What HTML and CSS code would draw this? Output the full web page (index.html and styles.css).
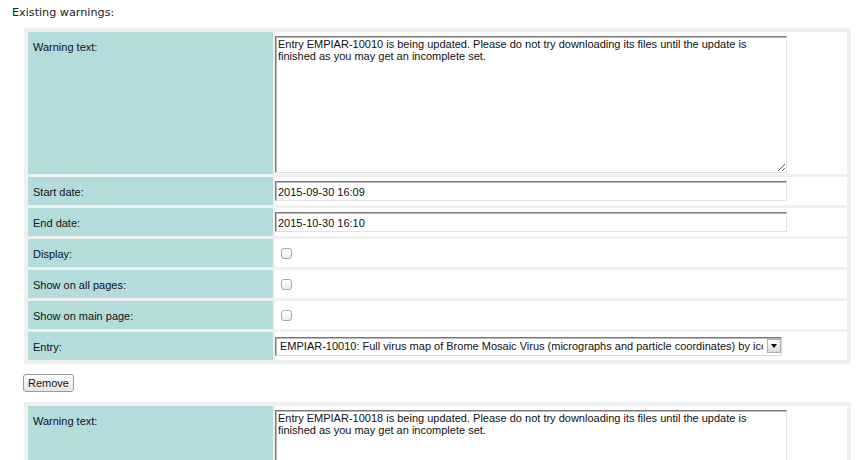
FILE: index.html
```html
<!DOCTYPE html>
<html>
<head>
<meta charset="utf-8">
<link rel="stylesheet" href="styles.css">
</head>
<body>
<div class="page">
  <div class="heading">Existing warnings:</div>

  <div class="warning">
    <table class="wtable">
      <tr>
        <td class="label">Warning text:</td>
        <td class="value"><textarea class="wtext">Entry EMPIAR-10010 is being updated. Please do not try downloading its files until the update is finished as you may get an incomplete set.</textarea></td>
      </tr>
      <tr>
        <td class="label">Start date:</td>
        <td class="value mid"><input class="field" type="text" value="2015-09-30 16:09"></td>
      </tr>
      <tr>
        <td class="label">End date:</td>
        <td class="value mid"><input class="field" type="text" value="2015-10-30 16:10"></td>
      </tr>
      <tr>
        <td class="label">Display:</td>
        <td class="value mid"><input class="check" type="checkbox"></td>
      </tr>
      <tr>
        <td class="label">Show on all pages:</td>
        <td class="value mid"><input class="check" type="checkbox"></td>
      </tr>
      <tr>
        <td class="label">Show on main page:</td>
        <td class="value mid"><input class="check" type="checkbox"></td>
      </tr>
      <tr>
        <td class="label">Entry:</td>
        <td class="value mid">
          <span class="selwrap">
            <select class="sel">
              <option>EMPIAR-10010: Full virus map of Brome Mosaic Virus (micrographs and particle coordinates) by icosahedral reconstruction</option>
            </select>
            <span class="selarrow"><span class="tri"></span></span>
          </span>
        </td>
      </tr>
    </table>
    <button class="btn" type="button">Remove</button>
  </div>

  <div class="warning">
    <table class="wtable">
      <tr>
        <td class="label">Warning text:</td>
        <td class="value"><textarea class="wtext">Entry EMPIAR-10018 is being updated. Please do not try downloading its files until the update is finished as you may get an incomplete set.</textarea></td>
      </tr>
    </table>
  </div>
</div>
</body>
</html>
```

FILE: styles.css
```css
html, body {
  margin: 0;
  padding: 0;
  background: #ffffff;
}

.page {
  padding: 6px 0 0 12px;
  font-family: "Liberation Sans", Arial, sans-serif;
  color: #111;
}

.heading {
  font-family: "DejaVu Sans", Verdana, sans-serif;
  font-size: 11.2px;
  line-height: 13px;
  color: #222;
  margin: 0 0 9px 0;
}

.warning {
  margin-left: 12px;
}

.wtable {
  width: 827px;
  background: #f0f0f0;
  border-collapse: separate;
  border-spacing: 2px 3px;
  padding: 1px 2px;
  table-layout: fixed;
}

.label {
  width: 235px;
  background: #b4dcdb;
  font-size: 11px;
  line-height: 13px;
  padding: 9px 5px 6px 5px;
  vertical-align: top;
  color: #111;
}

.value {
  background: #ffffff;
  padding: 0;
  vertical-align: top;
}

.value.mid {
  vertical-align: middle;
  height: 28px;
}

.wtext {
  display: block;
  box-sizing: border-box;
  width: 512px;
  height: 137px;
  margin: 4px 0 1px 0;
  padding: 1px 2px;
  font-family: "Liberation Sans", Arial, sans-serif;
  font-size: 11px;
  line-height: 12px;
  color: #111;
  border: 1px solid;
  border-color: #7a7a7a #e2e2e2 #e2e2e2 #7a7a7a;
  box-shadow: inset 1px 1px 0 #b8b8b8;
  border-radius: 0;
  outline: none;
}

.field {
  display: block;
  box-sizing: border-box;
  width: 512px;
  height: 20px;
  margin: 0;
  padding: 1px 2px 0 2px;
  font-family: "Liberation Sans", Arial, sans-serif;
  font-size: 11px;
  color: #111;
  border: 1px solid;
  border-color: #7a7a7a #e2e2e2 #e2e2e2 #7a7a7a;
  box-shadow: inset 1px 1px 0 #b8b8b8;
  border-radius: 0;
  outline: none;
}

.check {
  -webkit-appearance: none;
  appearance: none;
  display: block;
  box-sizing: border-box;
  width: 11px;
  height: 11px;
  margin: 0 0 0 6px;
  border: 1px solid #a8a8a8;
  border-radius: 3px;
  background: linear-gradient(#ffffff, #ececec);
}

.selwrap {
  position: relative;
  display: block;
  width: 507px;
  height: 19px;
}

.sel {
  -webkit-appearance: none;
  appearance: none;
  display: block;
  box-sizing: border-box;
  width: 507px;
  height: 19px;
  margin: 0;
  padding: 0 18px 0 4px;
  font-family: "Liberation Sans", Arial, sans-serif;
  font-size: 11px;
  color: #111;
  background: #ffffff;
  border: 1px solid;
  border-color: #7a7a7a #d8d8d8 #d8d8d8 #7a7a7a;
  box-shadow: inset 1px 1px 0 #b8b8b8;
  border-radius: 0;
  outline: none;
}

.selarrow {
  position: absolute;
  right: 1px;
  top: 2px;
  width: 14px;
  height: 14px;
  box-sizing: border-box;
  border: 1px solid #b0b0b0;
  background: linear-gradient(#ffffff, #dcdcdc);
  display: flex;
  align-items: center;
  justify-content: center;
}

.tri {
  width: 0;
  height: 0;
  border-left: 3px solid transparent;
  border-right: 3px solid transparent;
  border-top: 4px solid #000;
  margin-top: 1px;
}

.btn {
  display: block;
  box-sizing: border-box;
  height: 18px;
  margin: 10px 0 10px -1px;
  padding: 0 4px;
  font-family: "Liberation Sans", Arial, sans-serif;
  font-size: 11px;
  color: #111;
  background: linear-gradient(#ffffff, #e6e6e6);
  border: 1px solid #9a9a9a;
  border-radius: 3px;
}
```
